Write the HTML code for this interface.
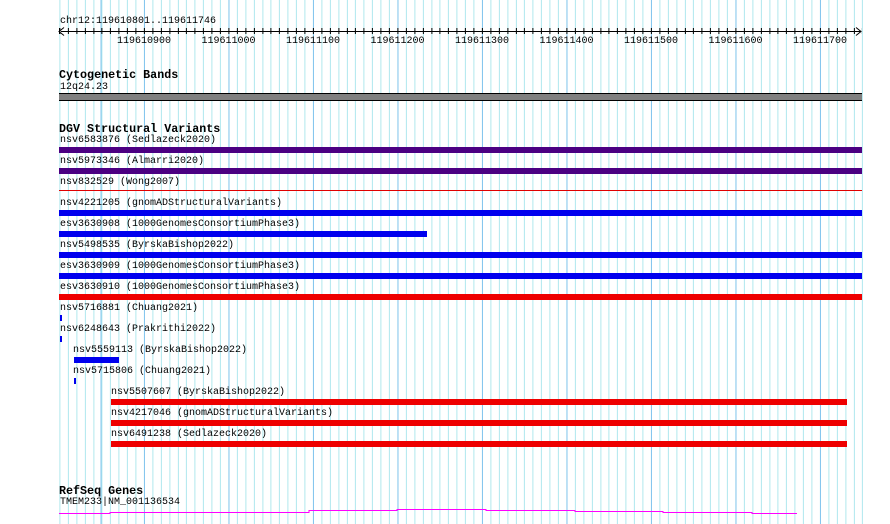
<!DOCTYPE html>
<html><head><style>
body{margin:0;width:890px;height:524px;background:#fff;position:relative;overflow:hidden;font-family:"Liberation Mono","DejaVu Sans Mono",monospace;}
#grid{position:absolute;left:59px;top:0;width:804px;height:524px;
background-image:repeating-linear-gradient(to right,#86c6ee 0 1px,transparent 1px 84.5px),repeating-linear-gradient(to right,#b0e8ee 0 1px,transparent 1px 8.45px);
background-position:85px 0,0.4px 0;}
.t{position:absolute;font-size:10px;line-height:11px;color:#000;white-space:pre;margin-top:1px;}
.h{position:absolute;font-size:11.7px;font-weight:bold;line-height:12px;white-space:pre;margin-top:1px;}
.b{position:absolute;height:6px;}
.lab{position:absolute;top:36px;font-size:10px;width:80px;text-align:center;}
#ticks{position:absolute;left:59px;top:28px;width:803px;height:6px;background-image:repeating-linear-gradient(to right,#000 0 1px,transparent 1px 8.45px);background-position:0.4px 0;}
</style></head><body>
<div id="grid"></div>
<div class="t" style="left:60px;top:15px">chr12:119610801..119611746</div>
<div id="ticks"></div>
<div style="position:absolute;left:61px;top:31px;width:800px;height:1px;background:#000"></div>
<svg style="position:absolute;left:58px;top:27px" width="806" height="9"><polyline points="6,0.5 1,4.5 6,8.5" fill="none" stroke="#000"/><polyline points="798,0.5 803,4.5 798,8.5" fill="none" stroke="#000"/></svg>
<div class="lab" style="left:104px">119610900</div>
<div class="lab" style="left:188.5px">119611000</div>
<div class="lab" style="left:273px">119611100</div>
<div class="lab" style="left:357.5px">119611200</div>
<div class="lab" style="left:442px">119611300</div>
<div class="lab" style="left:526.5px">119611400</div>
<div class="lab" style="left:611px">119611500</div>
<div class="lab" style="left:695.5px">119611600</div>
<div class="lab" style="left:780px">119611700</div>

<div class="h" style="left:59px;top:68px">Cytogenetic Bands</div>
<div class="t" style="left:60px;top:81px">12q24.23</div>
<div style="position:absolute;left:59px;top:93px;width:803px;height:6px;background:#808080;border-top:1px solid #000;border-bottom:1px solid #000"></div>

<div class="h" style="left:59px;top:122px">DGV Structural Variants</div>
<div class="t" style="left:60px;top:134px">nsv6583876 (Sedlazeck2020)</div>
<div class="b" style="left:59px;top:147px;width:803px;background:#4b0082"></div>
<div class="t" style="left:60px;top:155px">nsv5973346 (Almarri2020)</div>
<div class="b" style="left:59px;top:168px;width:803px;background:#4b0082"></div>
<div class="t" style="left:60px;top:176px">nsv832529 (Wong2007)</div>
<div style="position:absolute;left:59px;top:190px;width:803px;height:1px;background:#e00000"></div>
<div class="t" style="left:60px;top:197px">nsv4221205 (gnomADStructuralVariants)</div>
<div class="b" style="left:59px;top:210px;width:803px;background:#0000ee"></div>
<div class="t" style="left:60px;top:218px">esv3630908 (1000GenomesConsortiumPhase3)</div>
<div class="b" style="left:59px;top:231px;width:368px;background:#0000ee"></div>
<div class="t" style="left:60px;top:239px">nsv5498535 (ByrskaBishop2022)</div>
<div class="b" style="left:59px;top:252px;width:803px;background:#0000ee"></div>
<div class="t" style="left:60px;top:260px">esv3630909 (1000GenomesConsortiumPhase3)</div>
<div class="b" style="left:59px;top:273px;width:803px;background:#0000ee"></div>
<div class="t" style="left:60px;top:281px">esv3630910 (1000GenomesConsortiumPhase3)</div>
<div class="b" style="left:59px;top:294px;width:803px;background:#ee0000"></div>
<div class="t" style="left:60px;top:302px">nsv5716881 (Chuang2021)</div>
<div class="b" style="left:60px;top:315px;width:2px;background:#0000ee"></div>
<div class="t" style="left:60px;top:323px">nsv6248643 (Prakrithi2022)</div>
<div class="b" style="left:60px;top:336px;width:2px;background:#0000ee"></div>
<div class="t" style="left:73px;top:344px">nsv5559113 (ByrskaBishop2022)</div>
<div class="b" style="left:74px;top:357px;width:45px;background:#0000ee"></div>
<div class="t" style="left:73px;top:365px">nsv5715806 (Chuang2021)</div>
<div class="b" style="left:74px;top:378px;width:2px;background:#0000ee"></div>
<div class="t" style="left:111px;top:386px">nsv5507607 (ByrskaBishop2022)</div>
<div class="b" style="left:111px;top:399px;width:736px;background:#ee0000"></div>
<div class="t" style="left:111px;top:407px">nsv4217046 (gnomADStructuralVariants)</div>
<div class="b" style="left:111px;top:420px;width:736px;background:#ee0000"></div>
<div class="t" style="left:111px;top:428px">nsv6491238 (Sedlazeck2020)</div>
<div class="b" style="left:111px;top:441px;width:736px;background:#ee0000"></div>

<div class="h" style="left:59px;top:484px">RefSeq Genes</div>
<div class="t" style="left:60px;top:496px">TMEM233|NM_001136534</div>
<svg style="position:absolute;left:0;top:0" width="890" height="524"><polyline points="59,513.5 110,513.5 110,512.5 309,512.5 309,510.5 397,510.5 397,509.5 486,509.5 486,510.5 575,510.5 575,511.5 663,511.5 663,512.5 752,512.5 752,513.5 797,513.5" fill="none" stroke="#ff00ff" stroke-width="1"/></svg>
</body></html>
